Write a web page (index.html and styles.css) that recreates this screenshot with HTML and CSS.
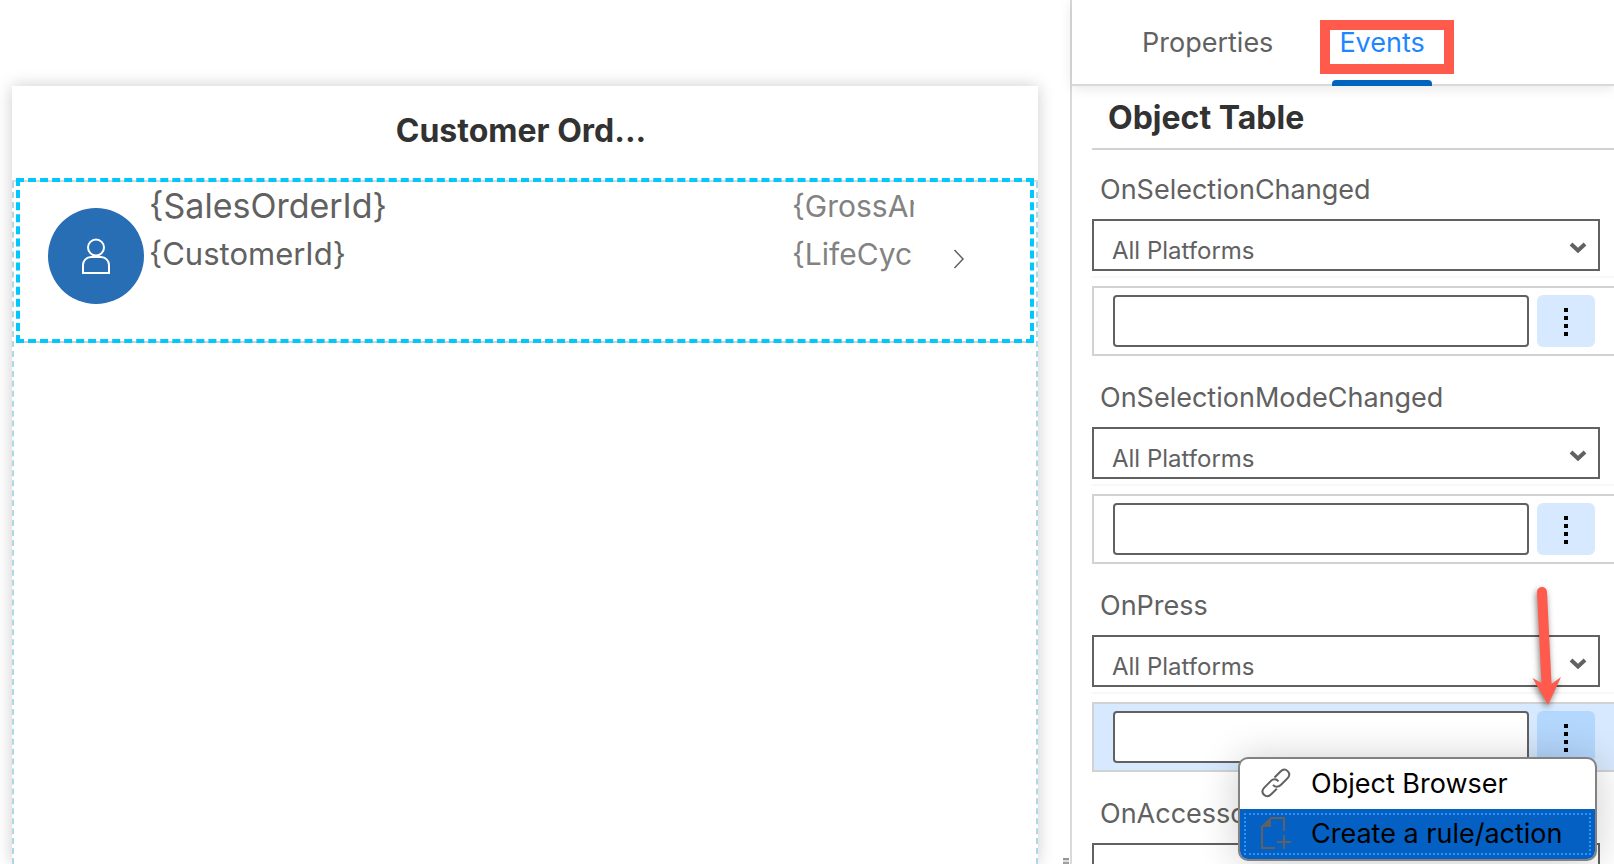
FILE: index.html
```html
<!DOCTYPE html>
<html lang="en">
<head>
<meta charset="utf-8">
<title>Page Editor</title>
<link rel="stylesheet" href="styles.css">
</head>
<body>
<div class="editor">
  <main class="canvas">
    <section class="page">
      <header class="page-header"><h1 class="page-title">Customer Ord...</h1></header>
      <div class="page-body">
        <article class="object-row">
          <span class="avatar">
            <svg width="28" height="36" viewBox="0 0 28 36" fill="none" stroke="#fff" stroke-width="2">
              <circle cx="14" cy="9.500" r="8"/>
              <path d="M1 35v-8a8 8 0 0 1 8-8h10a8 8 0 0 1 8 8v8z"/>
            </svg>
          </span>
          <div class="object-text">
            <p class="object-title">{SalesOrderId}</p>
            <p class="object-subtitle">{CustomerId}</p>
          </div>
          <div class="object-status">
            <p class="status-line">{GrossAmount}</p>
            <p class="status-line">{LifeCycleStatusName}</p>
          </div>
          <svg class="disclosure" width="12" height="20" viewBox="0 0 12 20" fill="none" stroke="#616161" stroke-width="1.500"><path d="M1.500 1l8.500 9-8.500 9"/></svg>
        </article>
      </div>
    </section>
    <span class="resize-grip"></span>
  </main>

  <aside class="inspector">
    <nav class="tabs">
      <button class="tab" type="button">Properties</button>
      <button class="tab tab-active" type="button">Events</button>
    </nav>
    <div class="inspector-content">
      <h2 class="inspector-title">Object Table</h2>

      <section class="field">
        <label class="field-label" for="platform-1">OnSelectionChanged</label>
        <div class="select-wrap">
          <select class="select" id="platform-1"><option>All Platforms</option></select>
          <svg class="caret" width="18" height="12" viewBox="0 0 18 12" fill="none" stroke="#616161" stroke-width="4"><path d="M2 2l7 6.500L16 2"/></svg>
        </div>
        <div class="binding">
          <input class="binding-input" type="text" aria-label="OnSelectionChanged action">
          <button class="more" type="button" aria-label="More"><i class="dot"></i><i class="dot"></i><i class="dot"></i><i class="dot"></i></button>
        </div>
      </section>

      <section class="field">
        <label class="field-label" for="platform-2">OnSelectionModeChanged</label>
        <div class="select-wrap">
          <select class="select" id="platform-2"><option>All Platforms</option></select>
          <svg class="caret" width="18" height="12" viewBox="0 0 18 12" fill="none" stroke="#616161" stroke-width="4"><path d="M2 2l7 6.500L16 2"/></svg>
        </div>
        <div class="binding">
          <input class="binding-input" type="text" aria-label="OnSelectionModeChanged action">
          <button class="more" type="button" aria-label="More"><i class="dot"></i><i class="dot"></i><i class="dot"></i><i class="dot"></i></button>
        </div>
      </section>

      <section class="field">
        <label class="field-label" for="platform-3">OnPress</label>
        <div class="select-wrap">
          <select class="select" id="platform-3"><option>All Platforms</option></select>
          <svg class="caret" width="18" height="12" viewBox="0 0 18 12" fill="none" stroke="#616161" stroke-width="4"><path d="M2 2l7 6.500L16 2"/></svg>
        </div>
        <div class="binding binding-active">
          <input class="binding-input" type="text" aria-label="OnPress action">
          <button class="more" type="button" aria-label="More"><i class="dot"></i><i class="dot"></i><i class="dot"></i><i class="dot"></i></button>
          <svg class="pointer" width="40" height="132" viewBox="0 0 40 132" fill="#ff5a4c">
            <path d="M10 13a5 5 0 0 1 10 0L24.500 105l9.500-7-13 28L5.500 99l9 5z"/>
          </svg>
          <div class="menu" role="menu">
            <button class="menu-item" type="button" role="menuitem">
              <svg width="32" height="34" viewBox="0 0 32 34" fill="none" stroke="#616161" stroke-width="2">
                <path d="M14.500 11.500l6-6c2.500-2.500 5-2.500 7.200-.400 2.200 2.200 2.100 4.900-.300 7.300l-6.600 6.600c-2.600 2.500-5.600 2.300-7.800-.200"/>
                <path d="M18.500 15.300c-2.200-2.500-5.300-2.600-7.800-.200l-6.400 6.500c-2.400 2.400-2.400 5-.300 7.200s4.700 2 7.200-.500l5.600-5.600"/>
              </svg>
              Object Browser
            </button>
            <button class="menu-item menu-item-focused" type="button" role="menuitem">
              <svg width="32" height="34" viewBox="0 0 32 34" fill="none" stroke="#616161" stroke-width="2">
                <path d="M15 32H2V11L11 2h13v13M24 19v14M17 26h14"/>
                <path d="M2 11L11 2v9z" fill="#616161" stroke="none"/>
              </svg>
              Create a rule/action
            </button>
          </div>
        </div>
      </section>

      <section class="field">
        <label class="field-label" for="platform-4">OnAccessoryButtonPress</label>
        <div class="select-wrap">
          <select class="select" id="platform-4"><option>All Platforms</option></select>
        </div>
      </section>
    </div>
  </aside>
</div>
</body>
</html>
```
FILE: styles.css
```css
*, *::before, *::after { box-sizing: border-box; }
body {
  margin: 0;
  background: #fff;
  color: #616161;
  font-family: Inter, "Liberation Sans", sans-serif;
  font-size: 27px;
}
h1, h2, p { margin: 0; }
button, input, select { font: inherit; color: inherit; margin: 0; }
.editor { display: flex; height: 100vh; overflow: hidden; }

.canvas {
  position: relative;
  display: flex;
  flex: 1;
  min-width: 0;
  padding: 86px 32px 0 12px;
}
.page {
  display: flex;
  flex-direction: column;
  flex: 1;
  min-width: 0;
  box-shadow: 0 0 16px rgba(0, 0, 0, 0.2);
}
.page-header {
  padding: 25px 24px 29px;
  border-bottom: 2px solid #d9d9d9;
  text-align: center;
}
.page-title {
  padding-right: 8px;
  color: #323232;
  font-size: 32px;
  line-height: 40px;
}
.page-body {
  flex: 1;
  border: dashed #add8e6;
  border-width: 0 2px;
}
.object-row {
  position: relative;
  display: flex;
  height: 165px;
  margin: -4px 2px 0;
  padding: 2px 65px 0 28px;
  border: 4px dashed #00c8ff;
  background: linear-gradient(#d2d2d2, #d2d2d2) 0 100% / 100% 2px no-repeat border-box;
}
.avatar {
  display: flex;
  align-items: center;
  justify-content: center;
  width: 96px;
  height: 96px;
  margin-top: 24px;
  border-radius: 50%;
  background: #286eb4;
}
.object-text { flex: 1; min-width: 0; padding-left: 5px; }
.object-title { font-size: 34px; line-height: 44px; }
.object-subtitle { padding-top: 4px; font-size: 31px; line-height: 44px; }
.object-status {
  width: 122px;
  overflow: hidden;
  color: #828282;
  font-size: 30px;
  line-height: 44px;
  white-space: nowrap;
}
.status-line + .status-line { padding-top: 4px; }
.disclosure { margin: 65px 0 0 39px; }
.resize-grip {
  position: absolute;
  right: 1px;
  bottom: 0;
  width: 6px;
  height: 6px;
  background: linear-gradient(#969696 2px, #dcdcdc 2px, #dcdcdc 4px, #a0a0a0 4px);
}

.inspector { flex: none; width: 544px; border-left: 2px solid #d9d9de; }
.tabs {
  display: flex;
  gap: 54px;
  height: 86px;
  padding-left: 65px;
  border-bottom: 2px solid #d9d9d9;
  box-shadow: 0 2px 12px rgba(0, 0, 0, 0.1);
}
.tab {
  position: relative;
  height: 84px;
  padding: 0 5px;
  border: 0;
  background: none;
}
.tab-active { padding: 0 7px; color: #1e87ff; }
.tab-active::before {
  content: "";
  position: absolute;
  top: 20px;
  left: -12px;
  right: -22px;
  height: 54px;
  border: 10px solid #ff5a4c;
}
.tab-active::after {
  content: "";
  position: absolute;
  left: 0;
  right: 0;
  bottom: -2px;
  height: 6px;
  border-radius: 4px 4px 0 0;
  background: #0064be;
}
.inspector-content { padding-left: 20px; }
.inspector-title {
  padding: 12px 16px 10px;
  border-bottom: 2px solid #d2d2d2;
  color: #323232;
  font-size: 32px;
  line-height: 40px;
}
.field { margin-bottom: 2px; }
.field-label {
  display: block;
  padding: 23px 8px 12px;
  line-height: 34px;
}
.select-wrap { position: relative; margin-right: 14px; }
.select {
  display: block;
  width: 100%;
  height: 52px;
  padding: 10px 18px 0;
  border: 2px solid #616161;
  border-radius: 0;
  background: #fff;
  font-size: 24px;
  appearance: none;
}
.caret { position: absolute; top: 23px; right: 13px; }
.binding {
  position: relative;
  display: flex;
  gap: 8px;
  height: 70px;
  margin-top: 15px;
  padding: 7px 19px;
  border: 2px solid #d2d2d2;
  border-right: 0;
}
.binding::before {
  content: "";
  position: absolute;
  top: -12px;
  left: -2px;
  right: 0;
  height: 2px;
  background: #f7f7f7;
}
.binding-input {
  flex: 1;
  min-width: 0;
  height: 52px;
  border: 2px solid #616161;
  border-radius: 4px;
  background: #fff;
}
.more {
  display: flex;
  flex-direction: column;
  align-items: center;
  justify-content: center;
  gap: 4px;
  width: 58px;
  height: 52px;
  padding: 2px 0 0;
  border: 0;
  border-radius: 6px;
  background: #d7e9fe;
}
.dot { width: 4px; height: 4px; background: #000; }
.binding-active { background: #d7e9fe; }
.binding-active .more { background: #b4d7fd; }
.pointer {
  position: absolute;
  top: -125px;
  right: 47px;
  filter: drop-shadow(-1px 3px 3px rgba(0, 0, 0, 0.5));
}
.menu {
  position: absolute;
  z-index: 1;
  top: 53px;
  right: 17px;
  width: 359px;
  overflow: hidden;
  border: 2px solid #828282;
  border-radius: 10px;
  background: #fff;
  box-shadow: 0 2px 40px rgba(0, 0, 0, 0.2);
}
.menu-item {
  display: flex;
  align-items: center;
  gap: 19px;
  width: 100%;
  height: 50px;
  padding: 0 0 2px 20px;
  border: 0;
  background: none;
  color: #000;
  white-space: nowrap;
}
.menu-item-focused {
  background: #0460c2;
  outline: 2px dotted #2896fa;
  outline-offset: -6px;
}
```
